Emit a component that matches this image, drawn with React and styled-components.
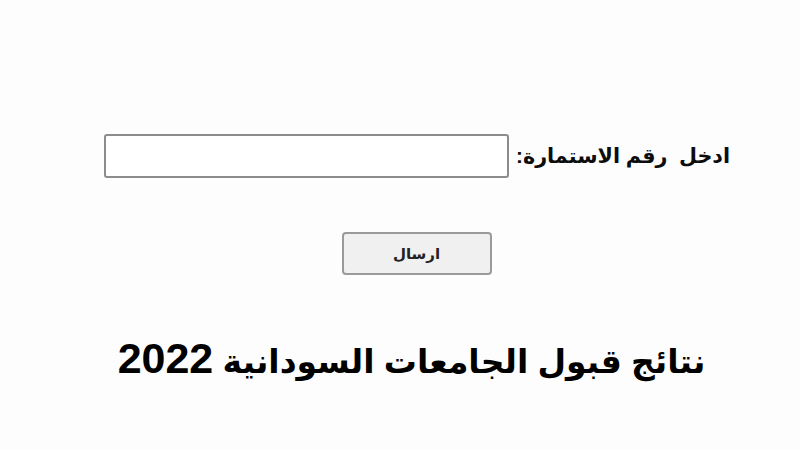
import React from 'react';
import styled, { createGlobalStyle } from 'styled-components';

const GlobalStyle = createGlobalStyle`
  html, body {
    margin: 0;
    padding: 0;
    background: #fdfdfd;
  }
`;

const StyledPage = styled.div`
  width: 800px;
  height: 450px;
  box-sizing: border-box;
  padding: 134px 70px 0 103px;
  display: flex;
  flex-direction: column;
  align-items: center;
  direction: rtl;
  font-family: 'Liberation Sans', 'DejaVu Sans', sans-serif;
  color: #111;
`;

const StyledFormRow = styled.div`
  display: flex;
  align-items: center;
  gap: 7px;
  align-self: stretch;
`;

const StyledLabel = styled.label`
  font-size: 20.7px;
  font-weight: bold;
  white-space: pre;
  color: #0c0c0c;
`;

const StyledInput = styled.input`
  width: 405px;
  height: 44px;
  box-sizing: border-box;
  border: 2px solid #8c8c8c;
  border-radius: 3px;
  background: #fff;
  outline: none;
`;

const StyledButton = styled.button`
  margin-top: 54px;
  width: 150px;
  height: 43px;
  box-sizing: border-box;
  border: 2px solid #9a9a9a;
  border-radius: 4px;
  background: #f0f0f0;
  font-family: inherit;
  font-size: 15px;
  font-weight: bold;
  color: #222;
`;

const StyledHeading = styled.h1`
  margin: 62px 10px 0 0;
  font-size: 33px;
  font-weight: bold;
  line-height: 1;
  white-space: nowrap;
  color: #000;
`;

const StyledYear = styled.span`
  font-size: 43px;
`;

const App = () => (
  <>
    <GlobalStyle />
    <StyledPage>
      <StyledFormRow>
        <StyledLabel htmlFor="form-number">ادخل  رقم الاستمارة:</StyledLabel>
        <StyledInput id="form-number" type="text" />
      </StyledFormRow>
      <StyledButton type="button">ارسال</StyledButton>
      <StyledHeading>
        نتائج قبول الجامعات السودانية <StyledYear>2022</StyledYear>
      </StyledHeading>
    </StyledPage>
  </>
);

export default App;
